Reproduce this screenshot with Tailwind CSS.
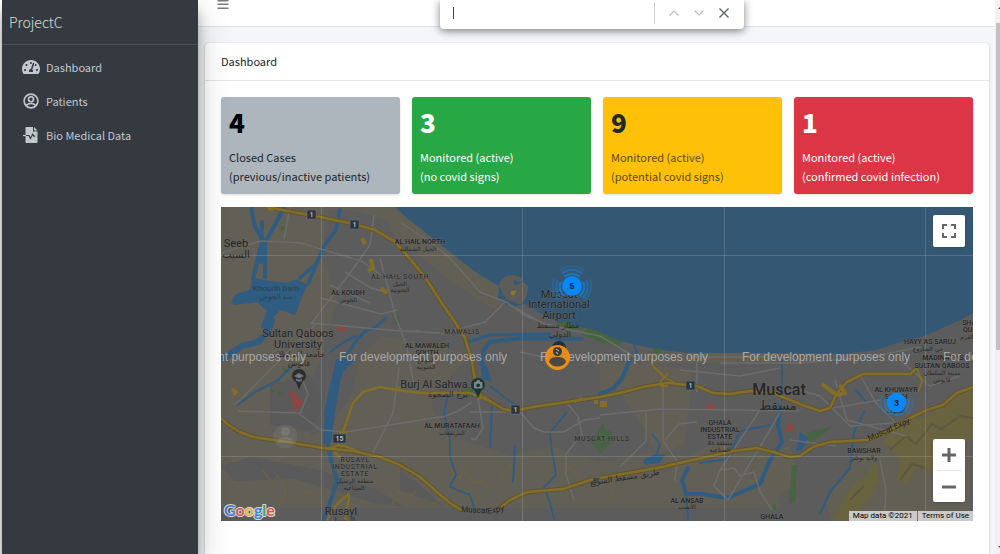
<!DOCTYPE html>
<html lang="en">
<head>
  <meta charset="UTF-8" />
  <meta name="viewport" content="width=device-width, initial-scale=1.0"/>
  <title>ProjectC | Dashboard</title>
  <script src="https://cdn.jsdelivr.net/npm/@tailwindcss/browser@4"></script>
</head>
<body class="h-screen flex overflow-hidden bg-white pl-[2px] font-['Noto_Sans_CJK_SC','Source_Sans_Pro',sans-serif] text-[11px] text-[#212529]">

  <!-- Sidebar -->
  <aside class="relative z-10 w-[196px] shrink-0 bg-[#343a40] text-[#c2c7d0] shadow-[0_14px_28px_rgba(0,0,0,0.25),0_10px_10px_rgba(0,0,0,0.22)]">
    <a href="#" class="flex h-[45px] items-center border-b border-[#4b545c] px-[7px] text-[14px] font-light text-white/80">ProjectC</a>
    <nav class="flex flex-col pt-[5px]">
      <a href="#" class="flex h-[34px] items-center gap-[6px] pl-5">
        <svg class="h-[18px] w-[18px]" viewBox="0 0 576 512" fill="currentColor"><path d="M288 32C128.900 32 0 160.900 0 320c0 52.800 14.300 102.300 39 144.800 5.600 9.600 16.300 15.200 27.400 15.200h443.200c11.100 0 21.800-5.600 27.400-15.200C561.800 422.300 576 372.800 576 320 576 160.900 447.100 32 288 32zm0 64c14.700 0 26.600 10.100 30.300 23.700-1.100 2.300-2.600 4.200-3.500 6.700l-9.200 27.700c-5.100 3.500-11 6-17.600 6-17.700 0-32-14.300-32-32S270.300 96 288 96zM96 384c-17.700 0-32-14.300-32-32s14.300-32 32-32 32 14.300 32 32-14.300 32-32 32zm48-160c-17.700 0-32-14.300-32-32s14.300-32 32-32 32 14.300 32 32-14.300 32-32 32zm246.800-72.400l-61.300 184C343.100 347.300 352 364.500 352 384c0 11.700-3.400 22.600-8.900 32H232.900c-5.500-9.500-8.900-20.300-8.900-32 0-33.900 26.500-61.400 59.900-63.600l61.300-184c4.200-12.600 17.700-19.500 30.400-15.200 12.600 4.200 19.400 17.900 15.200 30.400zm14.700 57.200l15.500-46.600c3.500-1.300 7.100-2.200 11.100-2.200 17.700 0 32 14.300 32 32s-14.300 32-32 32c-11.400 0-20.900-6.300-26.600-15.200zM480 384c-17.700 0-32-14.300-32-32s14.300-32 32-32 32 14.300 32 32-14.300 32-32 32z"/></svg>
        <span>Dashboard</span>
      </a>
      <a href="#" class="flex h-[34px] items-center gap-[6px] pl-5">
        <svg class="h-[16px] w-[18px]" viewBox="0 0 16 16" fill="none" stroke="currentColor" stroke-width="1.600"><circle cx="8" cy="8" r="6.900"/><circle cx="8" cy="6.200" r="2.500"/><path d="M3.300 12.800c.8-1.900 2.500-2.300 4.700-2.300s3.900.4 4.700 2.300"/></svg>
        <span>Patients</span>
      </a>
      <a href="#" class="flex h-[34px] items-center gap-[6px] pl-5">
        <svg class="h-[16px] w-[18px]" viewBox="0 0 18 16"><path d="M4 0h7v4.500h4.500V15a1 1 0 0 1-1 1h-10a1 1 0 0 1-1-1V1a1 1 0 0 1 .5-1z" fill="#c2c7d0"/><path d="M12 0l3.500 3.500H12z" fill="#c2c7d0"/><path d="M4 8.500h3l1.400 3 2.300-4.300 1 1.900h1.600" fill="none" stroke="#343a40" stroke-width="1.200"/><path d="M1 8.500h2.800" stroke="#c2c7d0" stroke-width="1.200"/></svg>
        <span>Bio Medical Data</span>
      </a>
    </nav>
  </aside>

  <!-- Content -->
  <div class="flex min-w-0 flex-1 flex-col bg-[#f4f6f9]">
    <header class="h-[27px] shrink-0 border-b border-[#dee2e6] bg-white pl-[19px]">
      <button type="button" aria-label="Toggle sidebar" class="block">
        <svg class="h-[10px] w-[12px]" viewBox="0 0 12 10" stroke="#7c7c7c" stroke-width="1.400"><path d="M.5.7h11M.5 4.300h11M.5 8.300h11"/></svg>
      </button>
    </header>

    <main class="flex flex-1 flex-col pt-4 pr-[6px] pl-[7px]">
      <section class="flex-1 rounded-t bg-white shadow-[0_0_1px_rgba(0,0,0,0.13),0_1px_3px_rgba(0,0,0,0.2)]">
        <h1 class="flex h-[38px] items-center border-b border-black/10 px-4">Dashboard</h1>

        <div class="p-4">
          <div class="grid grid-cols-4 gap-3">
            <div class="h-[97px] rounded-[3px] bg-[#adb5bd] px-2 pt-[7px] leading-[19px] text-[#212529] shadow">
              <h3 class="mb-[9px] text-[26px] leading-[35px] font-black text-black">4</h3>
              <p>Closed Cases<br>(previous/inactive patients)</p>
            </div>
            <div class="h-[97px] rounded-[3px] bg-[#28a745] px-2 pt-[7px] leading-[19px] text-white shadow">
              <h3 class="mb-[9px] text-[26px] leading-[35px] font-black">3</h3>
              <p>Monitored (active)<br>(no covid signs)</p>
            </div>
            <div class="h-[97px] rounded-[3px] bg-[#ffc107] px-2 pt-[7px] leading-[19px] text-[#5c4a14] shadow">
              <h3 class="mb-[9px] text-[26px] leading-[35px] font-black text-[#212a25]">9</h3>
              <p>Monitored (active)<br>(potential covid signs)</p>
            </div>
            <div class="h-[97px] rounded-[3px] bg-[#dc3545] px-2 pt-[7px] leading-[19px] text-white shadow">
              <h3 class="mb-[9px] text-[26px] leading-[35px] font-black">1</h3>
              <p>Monitored (active)<br>(confirmed covid infection)</p>
            </div>
          </div>

          <!-- Map -->
          <div class="relative mt-[13px] h-[314px] overflow-hidden bg-[#5c5c5c]">
            <svg class="h-full w-full" viewBox="221 207 752 314" preserveAspectRatio="xMidYMid slice" font-family="Roboto, 'DejaVu Sans', sans-serif">
              <rect x="221" y="207" width="752" height="314" fill="#5c5c5c"/>

              <!-- terrain -->
              <g fill="#625f55">
                <path d="M221 207h175l24 22 40 33 39 24 4 20-30-16-40-42-35-24-40-12-30-2-6 46 15 44-16 58-16 38 6 40 20-10 20-30 10-40 20-20 60 10 30 10-30 30-10 20 20 30 60 20 40-10 50 16 50-10 40 4 20-12 30 4 30 0 10 60H221z" opacity=".9"/>
                <path d="M390 207l30 21 60 47 22 14-6 22-46-30-60-50z"/>
                <path d="M600 363l50 0 40 8 2 14-8 60-28 10-10-22-26-40-20 4zM870 440l40-20 60-30v131H830l-4-20 20-30z"/>
                <path d="M640 353l160 0-30 10-120 0zM750 460l40-14 10 40-30 10z"/>
              </g>
              <g fill="#5a5a5a">
                <path d="M221 466l30-9 64 12 60 20 30 18-30-4-80-24-60 2z"/>
                <path d="M270 385l40-10 14 30-14 26-40-6zM400 470l14 10 30 26-44-16z"/>
              </g>
              <!-- hills -->
              <g fill="none" stroke="#6c6640" stroke-width="2.400" opacity=".5">
                <path d="M262 470l10 12 6-6 8 16-6 10M300 500l6-10 10 8M392 505l6-14 8 8 10-8M450 470l10 8 4-10 10 16 8-4 6 12M462 488l12 10M500 478l10-14 6 20M430 508l12-12 10 8M560 480l10-14 8 10M605 478l10 8-6 12"/>
              </g>
              <g fill="#6c643a">
                <path d="M836 514l14-26 14-10 12-18 4 20-12 20-16 20h-20zM884 441l16-20 26-4 20-14 27-16v52l-20 8-16 26-20-6-10 18-10-6 4-20z" opacity=".75"/>
              </g>
              <g fill="none" stroke="#57533c" stroke-width="2" opacity=".7"><path d="M890 450l16-14 10 8 16-20 12 6M900 480l12-16 14 4M940 430l20-14 13 2M850 500l14-14"/></g>

              <!-- sea -->
              <path d="M394 206l13 12 13 10 17 14 23 18 20 15 19 11-1 12 7 6 10 2 10-2 8 4 12 8 17 8 23 4 17 5 18 8 17 4 23 5 30 3h80l70 1 37-4 23-8 12-2 15-5 33-15 13-7V206z" fill="#345873"/>
              <path d="M499 286c1-7 7-11 14-11l10 3-2 4-8-2 2 6 8-4 5 4c0 8-2 14-8 19l-14-6z" fill="#5d5c59"/>
              <path d="M511 294l5-3M512 291l2 4" stroke="#8d7726" stroke-width="2.500"/>
              <g fill="#44643f">
                <path d="M556 323l10-2 18 9-16-1zM580 334l10-6 12 5 20 9-4 4-20-5zM653 349l8-1 0 5-7 0z"/>
                <path d="M589 439l7-4 7-11 3 6 6 2 2 10-7 4-6 8-7-8zM806 433l28-7-24 17zM792 465l5 0-2 38h-6zM281 226h5v5h-5zM393 318l6-2 1 7-6 1zM772 504h4v6h-4zM462 391l8-5 6 10-12 2z" opacity=".8"/>
                <path d="M282 368l9 2-6 3zM270 388l5 3-3 2zM278 391l5 2-4 2z"/>
              </g>

              <!-- rivers and reservoirs -->
              <g fill="#2f5c80">
                <path d="M253 277l10 3 24 3 10-4 10 6-12 30-15-5-7 8-5 12-7-3 6-16-10-9-23 3-3-2 5-9 14-4z"/>
                <path d="M336 360l12-2-8 24-4 24-5 36-8 2 2-36z"/>
                <path d="M480 361l7 5 5 16-10-4zM643 460l12-6 10 1-6 8-14 2zM800 432l8 6-6 12-6 1z"/>
              </g>
              <g fill="none" stroke="#2f5c80" stroke-linecap="round" stroke-linejoin="round">
                <path d="M251 207l4 20 10 16 0 34M284 207l-8 16-8 14-8 12-7 30M262 222l-1 40" stroke-width="4"/>
                <path d="M340 210l-4 20-12 16-6 14-10 24M318 262l-18 16" stroke-width="3.500"/>
                <path d="M272 320l-4 12-10 10-16 4-18 12" stroke-width="6"/>
                <path d="M386 318l-10 9-12 5-10 12-8 12" stroke-width="3"/>
                <path d="M352 360l-12 12-8 34-5 34 4 20 6 20-4 14-10 28" stroke-width="4"/>
                <path d="M330 352l14-10 12-6M293 365l-16 16-20 10-20 14" stroke-width="2"/>
                <path d="M582 339l-60-1-32 4-6 8-3 14" stroke-width="4"/>
                <path d="M470 341l20-6 60-1" stroke-width="3"/>
                <path d="M490 386l18 14 12 8M448 395l-4 18 6 26 0 18 6 18-6 12 20 8 4 12M566 413l-16 20 2 18 4 24-12 12 6 16 4 16M600 395l-12 2M652 434l8 10-4 12" stroke-width="1.700"/>
                <path d="M688 468l-6 12 4 14 16 0 26 4 32-14 10-24 12-18-4-16 2-20" stroke-width="4"/>
                <path d="M686 494l2 26M700 463l28-4 12-28 30-6" stroke-width="2"/>
                <path d="M630 360l-8 18-8 10-14 6" stroke-width="4"/>
                <path d="M864 412l-10 20-4 36-20 24-10 22M856 390l10 12M492 407l-2 40M515 446l-2 36M634 344l3 10M782 360l0 40" stroke-width="2"/>
              </g>

              <!-- minor roads -->
              <g fill="none" stroke="#6c6c6d" stroke-width="1.500">
                <path d="M221 253l40-12 40 2 60 18 20 14M290 207l-6 32M310 325l40-52 20-28 4-30M345 272l26 16 14 4M321 298l60 16 16-4M330 285l40 18M380 258l16 60 10 26 8 40M310 323l90 8 20 0"/>
                <path d="M235 405l60-60 20-20M238 411l60 2 24 18M300 414l8-20-10-26M322 430l24 2 100-16 14-6 12-8M373 453l20-40 6-46"/>
                <path d="M400 222l30 20 20 16 30 34 26 10 20 14 30 12M505 302l-20 20-44 12M400 331l40 2M516 308l24 14 30 8 30 6 40 24"/>
                <path d="M478 398l5 30-8 12-4-2M470 412l50 0 14 16 10 4 20 0 20-12 16-2M566 402l12 14 4 18-16 20 0 20 8 26"/>
                <path d="M600 415l60-6 140 2M663 384l0 57 14 20-2 20M665 440l14-16 18-2M697 392l0-32M646 411l0 30-26 26M760 410l-40 60-6 16 14 14 12-20 30-50 10-18M720 470l14-2 6 8 14-4 6 20 12 18"/>
                <path d="M720 363l80 0 70-6 50-10M680 370l60 6 40-8M800 390l20 6 30 30 60-4M820 410l60-10M835 380l12 40M790 440l46 6M880 460l6 30-2 30M847 420l60 16M900 360l30 26 30-10M860 375l16 28 20 20M520 352l46 10M690 357h80"/>
              </g>

              <!-- highways -->
              <g fill="none" stroke-linejoin="round">
                <path d="M266 207L320 217 354 224 375 230 394 241 405 253 425 277 443 305 455 322 465 338 472 362 475 380 480 395 493 403 503 409 513 411 533 407 567 402 600 397 620 393 643 387 667 383 697 386 713 393 730 394 750 391 773 393 800 404 820 411 830 408 837 393 847 382 863 374 910 374 917 368M221 418L227 424 240 432 253 437 287 442 323 448 353 451 380 457 400 465 420 477 437 492 450 503 463 511M500 508L510 500 527 492 563 489 593 479M600 478L657 468 693 460 733 451 757 448 773 452 790 457 800 456 813 447 830 442 867 440 887 432 910 418 927 410 943 405 957 393 973 387" stroke="#5f5434" stroke-width="4.500"/>
                <path d="M266 207L320 217 354 224 375 230 394 241 405 253 425 277 443 305 455 322 465 338 472 362 475 380 480 395 493 403 503 409 513 411 533 407 567 402 600 397 620 393 643 387 667 383 697 386 713 393 730 394 750 391 773 393 800 404 820 411 830 408 837 393 847 382 863 374 910 374 917 368M221 418L227 424 240 432 253 437 287 442 323 448 353 451 380 457 400 465 420 477 437 492 450 503 463 511M500 508L510 500 527 492 563 489 593 479M600 478L657 468 693 460 733 451 757 448 773 452 790 457 800 456 813 447 830 442 867 440 887 432 910 418 927 410 943 405 957 393 973 387" stroke="#826e26" stroke-width="2.600"/>
                <path d="M343 432L353 403 363 392 380 387 397 390 420 393 470 393 480 397 487 400M347 432l-8 0M327 449l12-4 8 2M345 446l14 6M334 452l12 10M346 521c-2-12 6-20 2-28M327 520l10-16 12-10" stroke="#826e26" stroke-width="2.400"/>
                <path d="M652 365l12 12 14 8M660 383l8-10M910 375l8-8M917 368l5 14-4 10M477 399l10-2M574 402l8-4M660 386l8 0M392 390l12-4" stroke="#826e26" stroke-width="2"/>
                <path d="M232 389l4 3-2 3M362 238l3 6M371 259l2 9-5 3M381 288l6 5M822 384l8 6 6 4M840 385l5 8-8 2M268 208l6 1" stroke="#826e26" stroke-width="4"/>
              </g>
              <path d="M600 401h7v6h-7zM594 400h4v4h-4z" fill="#826e26"/>
              <path d="M338 327h7v4h-7zM289 392l6 0 3 6 6 4-6 6-4 4-2-12zM707 404h6v5h-6zM784 430l7-8 4 9z" fill="#8f4640"/>

              <!-- tile seams -->
              <path d="M321.500 207v314M522.500 207v314M724.500 207v314M925.500 207v314M221 255.500h752M221 456.500h752" stroke="#fff" stroke-opacity=".15"/>

              <!-- road shields -->
              <g fill="#283440" stroke="#6b7076" stroke-width=".6"><rect x="307" y="210" width="9" height="9"/><rect x="350" y="220" width="9" height="9"/><rect x="511" y="405" width="9" height="9"/><rect x="686" y="381" width="9" height="9"/><rect x="333" y="434" width="13" height="9"/></g>
              <g fill="#b5b5b5" font-size="7" font-weight="700" text-anchor="middle"><text x="311.500" y="217">1</text><text x="354.500" y="227">1</text><text x="515.500" y="412">1</text><text x="690.500" y="388">1</text><text x="339.500" y="441">15</text></g>

              <!-- place names -->
              <g fill="#262626" stroke="#686868" stroke-width="1.200" stroke-opacity=".6" paint-order="stroke" text-anchor="middle">
                <g font-size="11">
                  <text x="236" y="247">Seeb</text><text x="298" y="337">Sultan Qaboos</text><text x="298" y="348">University</text>
                  <text x="434" y="388">Burj Al Sahwa</text><text x="341" y="515">Rusayl</text>
                  <text x="559" y="298">Muscat</text><text x="559" y="308">International</text><text x="559" y="319">Airport</text>
                </g>
                <text x="779" y="395" font-size="16" font-weight="500">Muscat</text>
                <g font-size="7" font-weight="500">
                  <text x="420" y="244">AL HAIL NORTH</text><text x="348" y="295">AL KOUDH</text>
                  <text x="427" y="348">AL MAWALEH</text><text x="427" y="355">SOUTH</text><text x="452" y="428">AL MURATAFAAH</text>
                  <text x="930" y="344">HAYY AS SARUJ</text><text x="943" y="360">MADINAT AS</text><text x="942" y="368">SULTAN QABOOS</text>
                  <text x="972" y="325">SHATI</text><text x="973" y="332">QURM</text><text x="896" y="392">AL KHUWAYR</text><text x="896" y="399">SOUTH</text>
                  <text x="864" y="453">BAWSHAR</text><text x="687" y="503">AL ANSAB</text><text x="772" y="519">GHALA</text>
                  <text x="720" y="425">GHALA</text><text x="720" y="432">INDUSTRIAL</text><text x="720" y="439">ESTATE</text>
                </g>
                <g font-size="7" font-weight="500" fill="#343434" letter-spacing=".6">
                  <text x="400" y="279">AL HAIL SOUTH</text><text x="462" y="334">MAWALIS</text><text x="602" y="441">MUSCAT HILLS</text>
                  <text x="355" y="462">RUSAYL</text><text x="355" y="469">INDUSTRIAL</text><text x="355" y="476">ESTATE</text>
                </g>
              </g>
              <g fill="#2b2b2b" text-anchor="middle" font-family="'DejaVu Sans', sans-serif">
                <g font-size="10"><text x="236" y="258">السيب</text></g>
                <g font-size="13"><text x="778" y="410">مسقط</text></g>
                <g font-size="8"><text x="299" y="357">جامعة السلطان</text><text x="299" y="366">قابوس</text><text x="448" y="397">برج الصحوة</text><text x="558" y="328">مطار مسقط</text><text x="560" y="337">الدولي</text><text x="343" y="523">الرسيل</text></g>
                <g font-size="6">
                  <text x="418" y="251">الحيل الشمالية</text><text x="400" y="286">الحيل</text><text x="400" y="292">الجنوبية</text><text x="348" y="302">الخوض</text>
                  <text x="426" y="362">الموالح</text><text x="426" y="369">الجنوبية</text><text x="452" y="435">المرتفعات</text><text x="355" y="483">منطقة الرسيل</text><text x="354" y="490">الصناعية</text>
                  <text x="720" y="445">منطقة غلا</text><text x="720" y="452">الصناعية</text><text x="687" y="509">الأنصب</text><text x="928" y="351">حي الصاروج</text><text x="967" y="339">القرم</text>
                  <text x="942" y="375">مدينة السلطان</text><text x="942" y="382">قابوس</text><text x="896" y="413">الجنوب</text><text x="864" y="460">ولاية بوشر</text>
                </g>
                <text x="625" y="480" font-size="8" transform="rotate(-9 625 480)">طريق مسقط السريع</text>
              </g>
              <g fill="#262626" font-size="8"><text x="461" y="512" transform="rotate(3 461 512)">Muscat</text><text x="488" y="514" transform="rotate(-12 488 514)">Expy</text><text x="869" y="441" transform="rotate(-24 869 441)">Muscat Expy</text><text x="593" y="483" font-size="7">8L</text></g>
              <g fill="#2a4256" font-size="8" text-anchor="middle"><text x="276" y="291">Khoudh Dam</text><text x="276" y="299" font-size="7" font-family="'DejaVu Sans', sans-serif">سد الخوض</text></g>

              <!-- point of interest pins -->
              <path d="M299 390l-3-8c-3-2-4-4-4-6a7 7 0 0 1 14 0c0 2-1 4-4 6z" fill="#2b2e31"/>
              <path d="M294 376l5-3 5 3-5 2.500zM296 378.500v2l3 1.500 3-1.500v-2l-3 1.500z" fill="#777"/>
              <path d="M478 398l-3-7c-3-2-4-4-4-6a7 7 0 0 1 14 0c0 2-1 4-4 6z" fill="#163637"/>
              <rect x="474" y="382" width="8.500" height="6.500" rx="1" fill="#7d8787"/><path d="M476 382l1-2h2.500l1 2z" fill="#7d8787"/><circle cx="478.200" cy="385.300" r="1.900" fill="#163637"/>

              <!-- inactive patient -->
              <g opacity=".4"><circle cx="285.500" cy="436.500" r="12" fill="#777"/><circle cx="285.500" cy="431.500" r="4.500" fill="#999"/><path d="M277 443c1-5 5-6 8.500-6s7.500 1 8.500 6z" fill="#999"/></g>

              <!-- watermark -->
              <g fill="#a8a8a8" font-family="'Liberation Sans', Arial, sans-serif" font-size="12">
                <text x="138" y="361">For development purposes only</text><text x="339" y="361">For development purposes only</text><text x="540" y="361">For development purposes only</text><text x="742" y="361">For development purposes only</text><text x="943" y="361">For development purposes only</text>
              </g>

              <!-- monitored patient -->
              <circle cx="559" cy="348" r="7" fill="#272c30"/>
              <circle cx="557.500" cy="357.500" r="12.500" fill="#eb9015"/>
              <circle cx="557.500" cy="357" r="9" fill="#dd8d20"/>
              <circle cx="557.500" cy="351.500" r="4.500" fill="#3b3937"/><path d="M549 362c1-4 4-5 8.500-5s7.500 1 8.500 5c-2 3-5 4.500-8.500 4.500s-6.500-1.500-8.500-4.500z" fill="#4b4741"/>
              <path d="M556 349l3 2M556 352l2 2" stroke="#a8a18d" stroke-width="1.200"/>

              <!-- clusters -->
              <g fill="none" stroke="#1683dc" stroke-width="2.200">
                <g opacity=".7"><path d="M564.500 276.500a12 12 0 0 1 15 0M583.500 282a12 12 0 0 1-4 14M560.500 282a12 12 0 0 0 4 14"/></g>
                <g opacity=".45"><path d="M562 273.500a15.500 15.500 0 0 1 20 0M586.500 280a15.500 15.500 0 0 1-4 18M557.500 280a15.500 15.500 0 0 0 4 18"/></g>
                <g opacity=".25"><path d="M560 270.500a19 19 0 0 1 24 0M590 279a19 19 0 0 1-5 21M554 279a19 19 0 0 0 5 21"/></g>
                <g opacity=".6"><path d="M889 412.500a12 12 0 0 0 15 0M908 398a12 12 0 0 1-4 14M885.500 398a12 12 0 0 0 4 14"/></g>
                <g opacity=".3"><path d="M911 396a15.500 15.500 0 0 1-4 18M882 396a15.500 15.500 0 0 0 4 18"/></g>
              </g>
              <circle cx="572" cy="286" r="9.800" fill="#0788fb"/><circle cx="896.500" cy="402.500" r="9.800" fill="#0788fb"/>
              <g fill="#10202c" font-family="'Liberation Sans', Arial, sans-serif" font-size="9" font-weight="700" text-anchor="middle"><text x="572" y="289">5</text><text x="896.500" y="405.500">3</text></g>

              <!-- logo -->
              <text x="224" y="516" font-family="Lato, sans-serif" font-size="16" font-weight="700" stroke="#d5d5d5" stroke-width="2" stroke-linejoin="round" paint-order="stroke"><tspan fill="#4a7fd0">G</tspan><tspan fill="#d85a4e">o</tspan><tspan fill="#e2b23a">o</tspan><tspan fill="#4a7fd0">g</tspan><tspan fill="#4aa062">l</tspan><tspan fill="#d85a4e">e</tspan></text>
            </svg>

            <button type="button" aria-label="Toggle fullscreen" class="absolute top-2 right-2 flex size-8 items-center justify-center rounded-[2px] bg-white shadow">
              <svg class="size-[14px]" viewBox="0 0 14 14" fill="none" stroke="#666" stroke-width="2"><path d="M1 5V1h4M9 1h4v4M13 9v4H9M5 13H1V9"/></svg>
            </button>
            <div class="absolute right-2 bottom-[19px] flex w-8 flex-col rounded-[2px] bg-white shadow">
              <button type="button" aria-label="Zoom in" class="flex h-[31px] items-center justify-center">
                <svg class="size-[14px]" viewBox="0 0 14 14" stroke="#666" stroke-width="3"><path d="M0 7h14M7 0v14"/></svg>
              </button>
              <hr class="mx-1 border-[#e6e6e6]">
              <button type="button" aria-label="Zoom out" class="flex h-[31px] items-center justify-center">
                <svg class="size-[14px]" viewBox="0 0 14 14" stroke="#666" stroke-width="3"><path d="M0 7h14"/></svg>
              </button>
            </div>
            <div class="absolute right-0 bottom-0 flex h-[10px] items-center divide-x divide-[#777] bg-[#cbcac7] font-[Roboto,sans-serif] text-[8px] leading-[10px] text-black">
              <span class="px-1">Map data ©2021</span>
              <a href="#" class="px-1">Terms of Use</a>
            </div>
          </div>
        </div>
      </section>
    </main>
  </div>

  <!-- Scrollbar -->
  <div aria-hidden="true" class="flex w-[5px] shrink-0 flex-col bg-[#f1f1f1] pl-px">
    <svg class="h-[23px] w-1 shrink-0" viewBox="0 0 4 23"><path d="M2 9l2-2v2z" fill="#505050"/></svg>
    <div class="h-[59%] bg-[#c1c1c1]"></div>
    <svg class="mt-auto h-[10px] w-1" viewBox="0 0 4 10"><path d="M2 2h2v2z" fill="#505050"/></svg>
  </div>

  <!-- Find bar -->
  <form class="absolute top-0 left-[440px] z-20 flex h-[29px] w-[304px] items-center rounded-b bg-white pb-1 pl-[13px] shadow-[0_2px_8px_rgba(0,0,0,0.5)]">
    <span class="h-3 w-px bg-[#444]"></span>
    <input type="text" aria-label="Find in page" class="h-5 min-w-0 flex-1 outline-none">
    <span class="mr-[11px] h-[22px] w-px bg-[#d0d0d0]"></span>
    <button type="button" aria-label="Previous" class="mr-[9px] flex size-4 items-center justify-center"><svg class="h-[6px] w-[10px]" viewBox="0 0 10 6" fill="none" stroke="#bdbdbd" stroke-width="1.200"><path d="M.5 5.500L5 1l4.500 4.500"/></svg></button>
    <button type="button" aria-label="Next" class="mr-[9px] flex size-4 items-center justify-center"><svg class="h-[6px] w-[10px]" viewBox="0 0 10 6" fill="none" stroke="#bdbdbd" stroke-width="1.200"><path d="M.5.5L5 5 9.500.5"/></svg></button>
    <button type="button" aria-label="Close" class="mr-[12px] flex size-4 items-center justify-center"><svg class="size-[10px]" viewBox="0 0 10 10" stroke="#5f6368" stroke-width="1.400"><path d="M.5.5l9 9M9.500.5l-9 9"/></svg></button>
  </form>

</body>
</html>
